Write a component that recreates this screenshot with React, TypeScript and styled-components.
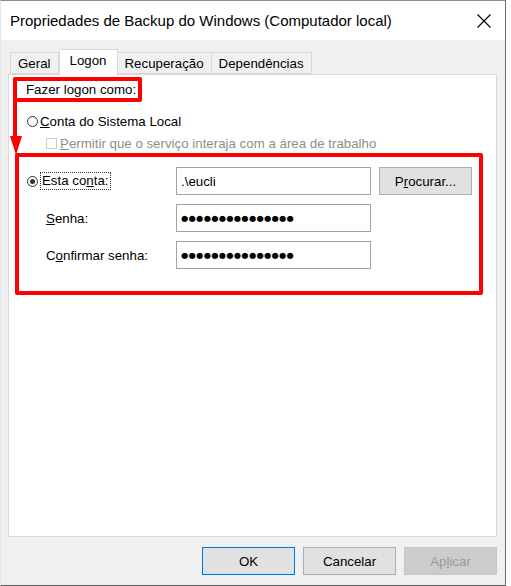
import React from 'react';
import styled, { createGlobalStyle } from 'styled-components';

const GlobalStyle = createGlobalStyle`
  html, body {
    margin: 0;
    padding: 0;
    background: #ffffff;
  }
  body {
    font-family: "Liberation Sans", Arial, sans-serif;
    font-size: 13.3px;
    color: #000;
  }
`;

const Window = styled.div`
  box-sizing: border-box;
  width: 506px;
  height: 586px;
  border: 1px solid #8c8c8c;
  border-left-color: #e4e4e4;
  border-right-color: #6b6b6b;
  border-bottom-color: #5c5c5c;
  background: #f0f0f0;
  display: flex;
  flex-direction: column;
`;

const TitleBar = styled.div`
  height: 39px;
  flex: none;
  background: #fff;
  display: flex;
  align-items: center;
  justify-content: space-between;
  padding: 0 14px 0 9px;
  font-size: 15px;
`;

const Body = styled.div`
  flex: 1;
  display: flex;
  flex-direction: column;
  padding: 9px 8px 10px 7px;
  min-height: 0;
`;

const TabStrip = styled.div`
  height: 25px;
  display: flex;
  align-items: flex-end;
  padding-left: 2px;
`;

const Tab = styled.div<{ active?: boolean }>`
  box-sizing: border-box;
  height: ${({ active }) => (active ? '26px' : '22px')};
  margin-bottom: ${({ active }) => (active ? '-1px' : '0')};
  padding: ${({ active }) => (active ? '3px 10px 0' : '3px 7px 0')};
  background: ${({ active }) => (active ? '#fff' : '#f0f0f0')};
  border: 1px solid #d9d9d9;
  border-bottom: ${({ active }) => (active ? 'none' : '1px solid #d9d9d9')};
  border-left: ${({ active }) => (active ? '1px solid #d9d9d9' : 'none')};
  position: relative;
  z-index: ${({ active }) => (active ? 1 : 0)};
  &:first-child {
    border-left: 1px solid #d9d9d9;
  }
`;

const Panel = styled.div`
  flex: 1;
  position: relative;
  background: #fff;
  border: 1px solid #d9d9d9;
  padding: 2px 4px 0;
  display: flex;
  flex-direction: column;
  align-items: flex-start;
`;

const RedFrame = styled.div`
  box-sizing: border-box;
  border: 4px solid #ff0000;
  border-radius: 2px;
`;

const LogonAsFrame = styled(RedFrame)`
  width: 129px;
  height: 25px;
  display: flex;
  align-items: center;
  padding: 0 0 0 9px;
  white-space: nowrap;
`;

const AccountFrame = styled(RedFrame)`
  width: 468px;
  margin: 1px 0 0 2px;
  padding: 10px 0 22px 8px;
  display: grid;
  grid-template-columns: 141px 195px 93px;
  grid-auto-rows: 28px;
  column-gap: 8px;
  row-gap: 9px;
`;

const Arrow = styled.svg`
  position: absolute;
  left: 1px;
  top: 26px;
`;

const OptionRow = styled.div<{ indent: number; top: number }>`
  display: flex;
  align-items: center;
  height: 18px;
  margin-left: ${({ indent }) => indent}px;
  margin-top: ${({ top }) => top}px;
`;

const Radio = styled.span<{ checked?: boolean }>`
  box-sizing: border-box;
  width: 11px;
  height: 11px;
  border-radius: 50%;
  border: 1px solid #333;
  background: #fff;
  display: inline-flex;
  align-items: center;
  justify-content: center;
  margin-right: 2px;
  flex: none;
  &::after {
    content: '';
    width: 5px;
    height: 5px;
    border-radius: 50%;
    background: ${({ checked }) => (checked ? '#333' : 'transparent')};
  }
`;

const CheckBox = styled.span`
  box-sizing: border-box;
  width: 11px;
  height: 11px;
  border: 1px solid #cccccc;
  background: #fff;
  margin-right: 3px;
  flex: none;
`;

const Label = styled.span<{ disabled?: boolean }>`
  color: ${({ disabled }) => (disabled ? '#8d8d8d' : '#000')};
  white-space: nowrap;
`;

const FocusLabel = styled.span`
  border: 1px dotted #333;
  padding: 0 1px;
  line-height: 16px;
`;

const FieldLabel = styled.div<{ indent?: number }>`
  display: flex;
  align-items: center;
  padding-left: ${({ indent }) => indent || 0}px;
  white-space: nowrap;
`;

const TextBox = styled.div`
  box-sizing: border-box;
  border: 1px solid #a3a3a3;
  background: #fff;
  display: flex;
  align-items: center;
  padding-left: 4px;
`;

const Dots = styled.span`
  font-family: "DejaVu Sans", sans-serif;
  font-size: 8.2px;
  letter-spacing: 0.4px;
`;

const Button = styled.div<{ focused?: boolean; disabled?: boolean }>`
  box-sizing: border-box;
  width: 93px;
  height: 28px;
  display: flex;
  align-items: center;
  justify-content: center;
  background: ${({ disabled }) => (disabled ? '#cccccc' : '#e1e1e1')};
  color: ${({ disabled }) => (disabled ? '#9a9a9a' : '#000')};
  border: 1px solid
    ${({ focused, disabled }) =>
      focused ? '#0078d7' : disabled ? '#c6c6c6' : '#adadad'};
  box-shadow: ${({ focused }) => (focused ? 'inset 0 0 0 1px #cce4f7' : 'none')};
`;

const ButtonBar = styled.div`
  display: flex;
  justify-content: flex-end;
  gap: 8px;
  margin-top: 10px;
`;

const dots = '●'.repeat(15);

export default function App() {
  return (
    <>
      <GlobalStyle />
      <Window>
        <TitleBar>
          <span>Propriedades de Backup do Windows (Computador local)</span>
          <svg width="14" height="14" viewBox="0 0 14 14">
            <path d="M0.5 0.5L13.5 13.5M13.5 0.5L0.5 13.5" stroke="#000" strokeWidth="1.1" />
          </svg>
        </TitleBar>
        <Body>
          <TabStrip>
            <Tab>Geral</Tab>
            <Tab active>Logon</Tab>
            <Tab>Recuperação</Tab>
            <Tab>Dependências</Tab>
          </TabStrip>
          <Panel>
            <LogonAsFrame>Fazer logon como:</LogonAsFrame>
            <Arrow width="13" height="56" viewBox="0 0 13 56">
              <rect x="3" y="0" width="4" height="38" fill="#ff0000" />
              <polygon points="0,35 12,35 6,54" fill="#ff0000" />
            </Arrow>
            <OptionRow indent={14} top={10}>
              <Radio />
              <Label>
                <u>C</u>onta do Sistema Local
              </Label>
            </OptionRow>
            <OptionRow indent={33} top={4}>
              <CheckBox />
              <Label disabled>
                <u>P</u>ermitir que o serviço interaja com a área de trabalho
              </Label>
            </OptionRow>
            <AccountFrame>
              <FieldLabel>
                <Radio checked />
                <FocusLabel>
                  Esta co<u>n</u>ta:
                </FocusLabel>
              </FieldLabel>
              <TextBox>.\eucli</TextBox>
              <Button>
                P<u>r</u>ocurar...
              </Button>
              <FieldLabel indent={19}>
                <u>S</u>enha:
              </FieldLabel>
              <TextBox>
                <Dots>{dots}</Dots>
              </TextBox>
              <span />
              <FieldLabel indent={19}>
                C<u>o</u>nfirmar senha:
              </FieldLabel>
              <TextBox>
                <Dots>{dots}</Dots>
              </TextBox>
            </AccountFrame>
          </Panel>
          <ButtonBar>
            <Button focused>OK</Button>
            <Button>Cancelar</Button>
            <Button disabled>
              Ap<u>l</u>icar
            </Button>
          </ButtonBar>
        </Body>
      </Window>
    </>
  );
}
